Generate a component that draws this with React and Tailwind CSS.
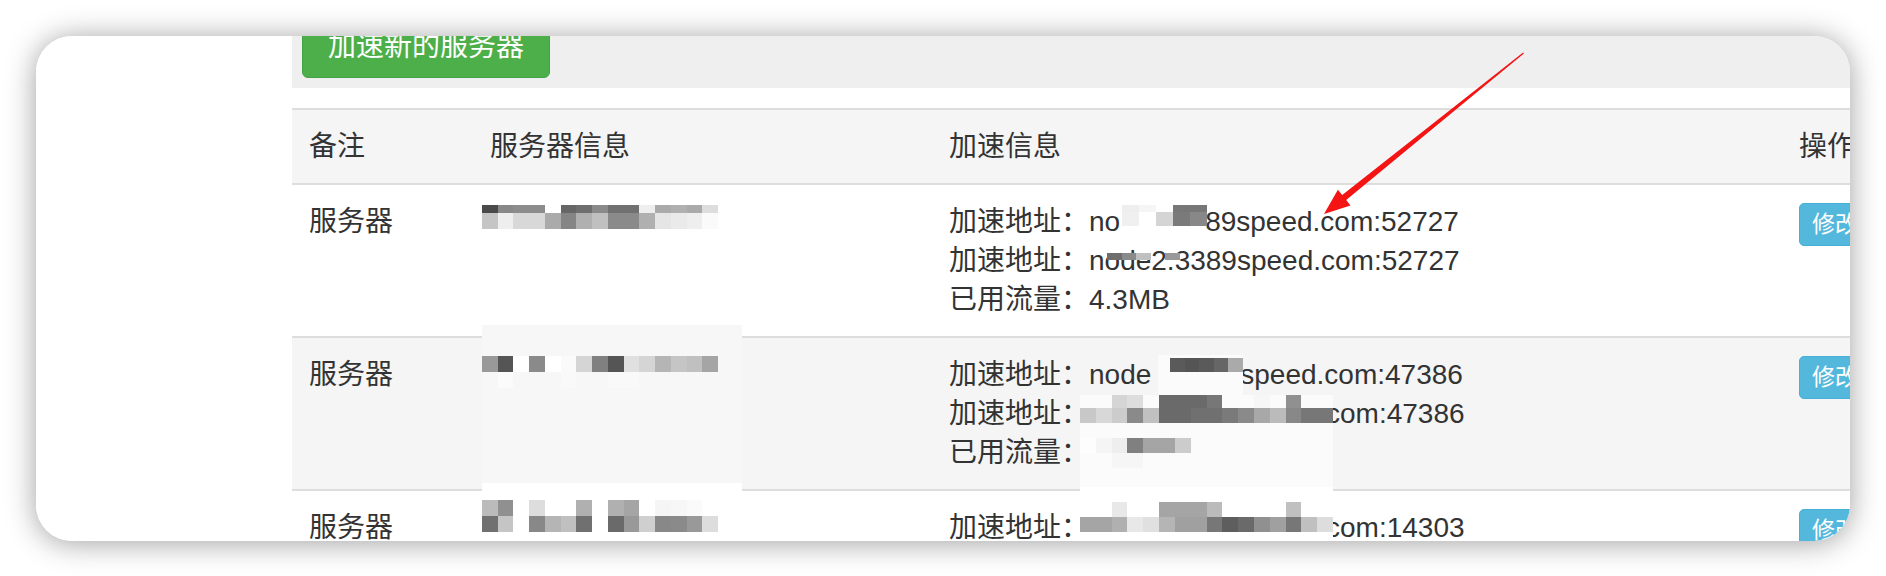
import React from 'react'

// redaction mosaics: rows of grey cells, colours written as full class names
const Mosaic = ({ className, rows }) => (
    <div className={`absolute flex flex-col ${className}`}>
        {rows.map((row, i) => (
            <div key={i} className={`flex ${row.h}`}>
                {row.cells.map((c, j) => (
                    <div key={j} className={`flex-1 ${c}`} />
                ))}
            </div>
        ))}
    </div>
)

const W = 'bg-transparent'

const mosaics = [
    // row 1 / server info
    {
        className: 'left-[190px] top-[97px] w-[236px]',
        rows: [
            { h: 'h-[8px]', cells: ['bg-[#4a4a4a]', 'bg-[#888888]', 'bg-[#8c8c8c]', 'bg-[#8c8c8c]', 'bg-white', 'bg-[#666666]', 'bg-[#6e6e6e]', 'bg-[#8a8a8a]', 'bg-[#707070]', 'bg-[#707070]', 'bg-[#eeeeee]', 'bg-[#aaaaaa]', 'bg-[#b0b0b0]', 'bg-[#aaaaaa]', 'bg-[#dddddd]'] },
            { h: 'h-[16px]', cells: ['bg-[#c5c5c5]', 'bg-[#eeeeee]', 'bg-[#d8d8d8]', 'bg-[#d8d8d8]', 'bg-[#aaaaaa]', 'bg-[#858585]', 'bg-[#b0b0b0]', 'bg-[#c0c0c0]', 'bg-[#8a8a8a]', 'bg-[#8a8a8a]', 'bg-[#b0b0b0]', 'bg-[#e5e5e5]', 'bg-[#eaeaea]', 'bg-[#eeeeee]', 'bg-[#fafafa]'] },
        ],
    },
    // row 2 / server info
    {
        className: 'left-[190px] top-[248px] w-[236px]',
        rows: [
            { h: 'h-[16px]', cells: ['bg-[#999999]', 'bg-[#555555]', 'bg-white', 'bg-[#8a8a8a]', 'bg-white', 'bg-[#fafafa]', 'bg-[#d5d5d5]', 'bg-[#808080]', 'bg-[#555555]', 'bg-[#e0e0e0]', 'bg-[#d5d5d5]', 'bg-[#b5b5b5]', 'bg-[#c5c5c5]', 'bg-[#c0c0c0]', 'bg-[#a5a5a5]'] },
            { h: 'h-[16px]', cells: [W, 'bg-[#fbfbfb]', W, W, W, 'bg-[#f9f9f9]', W, W, 'bg-[#f9f9f9]', 'bg-[#f9f9f9]', W, W, W, W, W] },
        ],
    },
    // row 3 / server info
    {
        className: 'left-[190px] top-[392px] w-[236px]',
        rows: [
            { h: 'h-[16px]', cells: ['bg-[#bbbbbb]', 'bg-[#909090]', W, 'bg-[#dddddd]', W, W, 'bg-[#b0b0b0]', W, 'bg-[#b0b0b0]', 'bg-[#a5a5a5]', W, 'bg-[#f5f5f5]', 'bg-[#f7f7f7]', 'bg-[#fafafa]', W] },
            { h: 'h-[16px]', cells: ['bg-[#707070]', 'bg-[#c5c5c5]', W, 'bg-[#888888]', 'bg-[#b5b5b5]', 'bg-[#c0c0c0]', 'bg-[#707070]', W, 'bg-[#6a6a6a]', 'bg-[#999999]', 'bg-[#cfcfcf]', 'bg-[#888888]', 'bg-[#8a8a8a]', 'bg-[#999999]', 'bg-[#dddddd]'] },
        ],
    },
    // row 1 / first address
    {
        className: 'left-[830px] top-[97px] w-[85px]',
        rows: [
            { h: 'h-[7px]', cells: ['bg-[#eeeeee]', 'bg-[#f5f5f5]', 'bg-white', 'bg-[#777777]', 'bg-[#777777]'] },
            { h: 'h-[14px]', cells: ['bg-[#f0f0f0]', 'bg-white', 'bg-[#d5d5d5]', 'bg-[#7a7a7a]', 'bg-[#888888]'] },
        ],
    },
    // row 1 / second address strip
    {
        className: 'left-[815px] top-[145px] w-[73px]',
        rows: [
            { h: 'h-[7px]', cells: ['bg-[#6e6e6e]', 'bg-[#8a8a8a]', 'bg-[#c0c0c0]', W, 'bg-[#999999]'] },
        ],
    },
    // row 2 / first address
    {
        className: 'left-[878px] top-[250px] w-[73px]',
        rows: [
            { h: 'h-[14px]', cells: ['bg-[#5a5a5a]', 'bg-[#555555]', 'bg-[#5a5a5a]', 'bg-[#666666]', 'bg-[#aaaaaa]'] },
        ],
    },
    // row 2 / second address
    {
        className: 'left-[788px] top-[287px] w-[253px]',
        rows: [
            { h: 'h-[13px]', cells: [W, W, 'bg-[#d5d5d5]', 'bg-[#dddddd]', W, 'bg-[#6a6a6a]', 'bg-[#6a6a6a]', 'bg-[#6a6a6a]', 'bg-[#777777]', W, W, 'bg-[#f6f6f6]', W, 'bg-[#909090]', W, W] },
            { h: 'h-[15px]', cells: ['bg-[#c8c8c8]', 'bg-[#d8d8d8]', 'bg-[#cccccc]', 'bg-[#8a8a8a]', 'bg-[#c0c0c0]', 'bg-[#6a6a6a]', 'bg-[#6a6a6a]', 'bg-[#707070]', 'bg-[#707070]', 'bg-[#7a7a7a]', 'bg-[#8a8a8a]', 'bg-[#a8a8a8]', 'bg-[#bbbbbb]', 'bg-[#888888]', 'bg-[#777777]', 'bg-[#777777]'] },
        ],
    },
    // row 2 / traffic
    {
        className: 'left-[788px] top-[330px] w-[253px]',
        rows: [
            { h: 'h-[15px]', cells: ['bg-[#fdfdfd]', 'bg-[#f5f5f5]', 'bg-[#eeeeee]', 'bg-[#808080]', 'bg-[#a5a5a5]', 'bg-[#a5a5a5]', 'bg-[#cccccc]', W, W, W, W, W, W, W, W, W] },
            { h: 'h-[15px]', cells: [W, W, 'bg-[#f6f6f6]', 'bg-[#f6f6f6]', W, W, W, W, W, W, W, W, W, W, W, W] },
        ],
    },
    // row 3 / first address
    {
        className: 'left-[788px] top-[394px] w-[253px]',
        rows: [
            { h: 'h-[15px]', cells: [W, W, 'bg-[#e8e8e8]', W, W, 'bg-[#a5a5a5]', 'bg-[#a5a5a5]', 'bg-[#a5a5a5]', 'bg-[#bbbbbb]', W, W, W, W, 'bg-[#c0c0c0]', W, W] },
            { h: 'h-[15px]', cells: ['bg-[#a5a5a5]', 'bg-[#a5a5a5]', 'bg-[#b0b0b0]', 'bg-[#e8e8e8]', 'bg-[#e0e0e0]', 'bg-[#b5b5b5]', 'bg-[#a0a0a0]', 'bg-[#a0a0a0]', 'bg-[#777777]', 'bg-[#5e5e5e]', 'bg-[#6a6a6a]', 'bg-[#909090]', 'bg-[#a0a0a0]', 'bg-[#777777]', 'bg-[#c0c0c0]', 'bg-[#dddddd]'] },
        ],
    },
]

const Cell = ({ children, className = '' }) => (
    <div className={`px-[17px] pt-[17px] pb-[17px] whitespace-nowrap ${className}`}>{children}</div>
)

const Line = ({ children }) => <div className="relative h-[39px] leading-[39px] whitespace-nowrap">{children}</div>

const EditButton = () => (
    <span className="inline-block bg-[#54b8dd] border border-[#46b0d8] rounded-[5px] text-white text-[23px] leading-[21px] px-[12px] py-[10px]">
        修改
    </span>
)

const rows = [
    {
        bg: 'bg-white',
        info: [
            <>加速地址：no<span className="inline-block w-[85px]" />89speed.com:52727</>,
            <>加速地址：node2.3389speed.com:52727</>,
            <>已用流量：4.3MB</>,
        ],
    },
    {
        bg: 'bg-[#f5f5f5]',
        info: [
            <>加速地址：node<span className="inline-block w-[89px]" />speed.com:47386</>,
            <>加速地址：<span className="inline-block w-[237px]" />com:47386</>,
            <>已用流量：</>,
        ],
    },
    {
        bg: 'bg-white',
        info: [<>加速地址：<span className="inline-block w-[237px]" />com:14303</>, <>&nbsp;</>, <>&nbsp;</>],
    },
]

const cols = 'grid grid-cols-[181px_459px_850px_1fr]'

export default function App() {
    return (
        <div className="relative w-[1886px] h-[576px] overflow-hidden bg-white p-[36px] font-['Liberation_Sans','Noto_Sans_CJK_SC',sans-serif] text-[28px] text-[#333333]">
            <div className="flex w-[1814px] h-[505px] rounded-[36px] overflow-hidden bg-white shadow-[0_2px_30px_rgba(0,0,0,0.38)]">
                <div className="w-[256px] shrink-0 bg-white" />
                <main className="flex-1 min-w-0 overflow-hidden">
                    <div className="-mt-[31px] bg-[#efefef] p-[10px]">
                        <button className="bg-[#4daf4a] border border-[#45a145] rounded-[6px] text-white text-[28px] leading-[39px] px-[25px] py-[11px]">
                            加速新的服务器
                        </button>
                    </div>
                    <div className="h-[20px]" />

                    <div className="relative w-[1600px]">
                        <div className={`${cols} bg-[#f5f5f5] border-t-2 border-b-2 border-[#dddddd]`}>
                            <Cell className="pb-[16px]"><Line>备注</Line></Cell>
                            <Cell className="pb-[16px]"><Line>服务器信息</Line></Cell>
                            <Cell className="pb-[16px]"><Line>加速信息</Line></Cell>
                            <Cell className="pb-[16px]"><Line>操作</Line></Cell>
                        </div>

                        {rows.map((row, i) => (
                            <div key={i} className={`${cols} ${row.bg} border-b-2 border-[#dddddd]`}>
                                <Cell><Line>服务器</Line></Cell>
                                <Cell />
                                <Cell>
                                    {row.info.map((l, j) => <Line key={j}>{l}</Line>)}
                                </Cell>
                                <Cell><EditButton /></Cell>
                            </div>
                        ))}

                        {/* redaction patches over the table */}
                        <div className="absolute left-[190px] top-[217px] w-[260px] h-[158px] bg-[#f7f7f7]" />
                        <div className="absolute left-[190px] top-[375px] w-[260px] h-[80px] bg-white" />
                        <div className="absolute left-[866px] top-[247px] w-[85px] h-[40px] bg-[#fbfbfb]" />
                        <div className="absolute left-[788px] top-[287px] w-[253px] h-[92px] bg-[#fbfbfb]" />
                        <div className="absolute left-[788px] top-[379px] w-[253px] h-[80px] bg-white" />
                        {mosaics.map((m, i) => <Mosaic key={i} {...m} />)}
                    </div>
                </main>
            </div>

            {/* red annotation arrow */}
            <svg className="absolute left-0 top-0 pointer-events-none" width="1886" height="576" viewBox="0 0 1886 576">
                <polygon
                    fill="#f41414"
                    points="1324,214 1350.5,205.4 1346.2,200.1 1523.9,53.5 1523.1,52.5 1342.2,195.1 1337.9,189.8"
                />
            </svg>
        </div>
    )
}
